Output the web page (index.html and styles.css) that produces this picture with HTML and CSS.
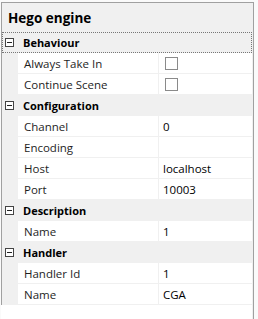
FILE: index.html
```html
<!DOCTYPE html>
<html>

<head>
  <link rel="stylesheet" href="styles.css">
</head>

<body>
  <div class="grid">
    <div class="title">Hego engine</div>

    <div class="category focused">
      <span class="toggle"></span>Behaviour
    </div>
    <div class="row">
      <span class="name">Always Take In</span>
      <span class="value"><span class="check"></span></span>
    </div>
    <div class="row">
      <span class="name">Continue Scene</span>
      <span class="value"><span class="check"></span></span>
    </div>

    <div class="category">
      <span class="toggle"></span>Configuration
    </div>
    <div class="row">
      <span class="name">Channel</span>
      <span class="value">0</span>
    </div>
    <div class="row">
      <span class="name">Encoding</span>
      <span class="value"></span>
    </div>
    <div class="row">
      <span class="name">Host</span>
      <span class="value">localhost</span>
    </div>
    <div class="row">
      <span class="name">Port</span>
      <span class="value">10003</span>
    </div>

    <div class="category">
      <span class="toggle"></span>Description
    </div>
    <div class="row">
      <span class="name">Name</span>
      <span class="value">1</span>
    </div>

    <div class="category">
      <span class="toggle"></span>Handler
    </div>
    <div class="row">
      <span class="name">Handler Id</span>
      <span class="value">1</span>
    </div>
    <div class="row">
      <span class="name">Name</span>
      <span class="value">CGA</span>
    </div>

    <div class="empty"></div>
  </div>
</body>

</html>
```

FILE: styles.css
```css
* {
  margin: 0;
  padding: 0;
  box-sizing: border-box;
}

body {
  background-color: #fafafa;
  font-family: "Open Sans", "Liberation Sans", sans-serif;
  font-size: 11.5px;
  color: #1e1e1e;
}

.grid {
  margin: 2px 0 0 1px;
  width: 253px;
  height: 317px;
  padding-right: 1px;
  border: 1px solid #a0a0a0;
  border-bottom: none;
  background-color: #f0f0f0;
  display: flex;
  flex-direction: column;
}

.title {
  height: 29px;
  padding-left: 6px;
  display: flex;
  align-items: center;
  font-size: 13.5px;
  font-weight: bold;
  color: #000;
}

.category {
  height: 21px;
  display: flex;
  align-items: center;
  font-size: 11px;
  font-weight: bold;
  color: #000;
}

.category.focused {
  outline: 1px dotted #777;
  outline-offset: -1px;
}

.toggle {
  width: 9px;
  height: 9px;
  margin: 0 9px 0 3px;
  border: 1px solid #444;
  background-color: #fff;
  position: relative;
}

.toggle::after {
  content: "";
  position: absolute;
  left: 1px;
  top: 3px;
  width: 5px;
  height: 1px;
  background-color: #222;
}

.row {
  height: 21px;
  display: flex;
  padding-left: 16px;
}

.name,
.value {
  display: flex;
  align-items: center;
  background-color: #fff;
  border-bottom: 1px solid #f0f0f0;
}

.name {
  width: 141px;
  padding-left: 6px;
  border-right: 1px solid #f0f0f0;
}

.value {
  flex: 1;
  padding-left: 4px;
  color: #000;
}

.check {
  width: 13px;
  height: 13px;
  margin-left: 2px;
  border: 1px solid #8a8a8a;
  background-color: #fff;
}

.empty {
  flex: 1;
  background-color: #fff;
  margin-left: -1px;
}
```
